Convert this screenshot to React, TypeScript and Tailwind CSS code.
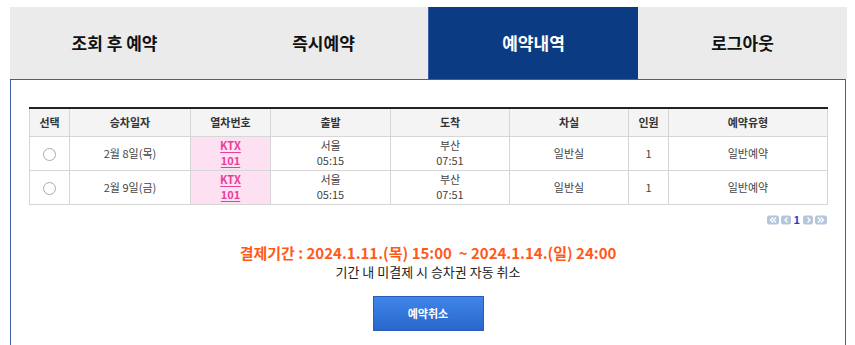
import React from "react";

const tabs = ["조회 후 예약", "즉시예약", "예약내역", "로그아웃"];

const cols = [
  { label: "선택", w: "w-[40px]" },
  { label: "승차일자", w: "w-[121px]" },
  { label: "열차번호", w: "w-[80px]" },
  { label: "출발", w: "w-[120px]" },
  { label: "도착", w: "w-[119px]" },
  { label: "차실", w: "w-[119px]" },
  { label: "인원", w: "w-[40px]" },
  { label: "예약유형", w: "w-[159px]" },
];

const rows = [
  { date: "2월 8일(목)" },
  { date: "2월 9일(금)" },
];

function PageIcon({ kind }: { kind: "first" | "prev" | "next" | "last" }) {
  const paths: Record<string, string> = {
    first: "M6 2.5 3.5 5 6 7.5M9 2.5 6.5 5 9 7.5",
    prev: "M6.5 2.5 4 5 6.5 7.5",
    next: "M4.5 2.5 7 5 4.5 7.5",
    last: "M3 2.5 5.5 5 3 7.5M6 2.5 8.5 5 6 7.5",
  };
  const w = kind === "first" || kind === "last" ? 12 : 10;
  return (
    <svg width={w} height="10" viewBox={`0 0 ${w} 10`} className="block">
      <rect x="0" y="0.5" width={w} height="9" rx="2.5" fill="#b3c6de" />
      <path d={paths[kind]} stroke="#fff" strokeWidth="1.4" fill="none" />
    </svg>
  );
}

export default function App() {
  return (
    <div className="w-[855px] h-[345px] overflow-hidden bg-white pt-[7px] pl-[10px] pr-[8px] font-['Noto_Sans_CJK_KR','Noto_Sans',sans-serif]">
      <div className="flex h-[72px] bg-[#ebebeb]">
        {tabs.map((t, i) => (
          <div
            key={t}
            className={
              i === 2
                ? "flex-1 flex items-center justify-center bg-[#0b3b82] text-white text-[17px] font-bold border-l border-[#3b5ea6]"
                : "flex-1 flex items-center justify-center text-[#111] text-[17px] font-bold"
            }
          >
            {t}
          </div>
        ))}
      </div>
      <div className="h-[330px] mr-[1px] border border-[#3b5ea6] bg-white px-[18px] pt-[27px]">
        <table className="w-[798px] table-fixed border-collapse text-[11px] text-[#444]">
          <thead>
            <tr className="h-[28px] border-t-2 border-[#222] bg-[#f4f4f4]">
              {cols.map((c) => (
                <th
                  key={c.label}
                  className={`${c.w} border border-[#d6d6d6] border-t-[#222] font-bold text-[#333] text-center`}
                >
                  {c.label}
                </th>
              ))}
            </tr>
          </thead>
          <tbody>
            {rows.map((r) => (
              <tr key={r.date} className="h-[34px] text-center">
                <td className="border border-[#d6d6d6]">
                  <span className="inline-block w-[13px] h-[13px] rounded-full border border-[#aaa] bg-white align-middle" />
                </td>
                <td className="border border-[#d6d6d6]">{r.date}</td>
                <td className="border border-[#d6d6d6] bg-[#fde0f1] leading-[15px] font-bold text-[#e8409a]">
                  <span className="underline underline-offset-2">KTX</span>
                  <br />
                  <span className="underline underline-offset-2">101</span>
                </td>
                <td className="border border-[#d6d6d6] leading-[15px]">
                  서울
                  <br />
                  05:15
                </td>
                <td className="border border-[#d6d6d6] leading-[15px]">
                  부산
                  <br />
                  07:51
                </td>
                <td className="border border-[#d6d6d6]">일반실</td>
                <td className="border border-[#d6d6d6]">1</td>
                <td className="border border-[#d6d6d6]">일반예약</td>
              </tr>
            ))}
          </tbody>
        </table>
        <div className="w-[798px] flex justify-end items-center gap-[2px] mt-[9px] h-[12px]">
          <PageIcon kind="first" />
          <PageIcon kind="prev" />
          <span className="text-[11px] font-bold text-[#1d3fd0] leading-none px-[1px]">1</span>
          <PageIcon kind="next" />
          <PageIcon kind="last" />
        </div>
        <div className="w-[798px] flex flex-col items-center mt-[17px]">
          <p className="text-[15px] font-bold text-[#ff5a1a] leading-[20px] whitespace-pre">
            결제기간 : 2024.1.11.(목) 15:00  ~ 2024.1.14.(일) 24:00
          </p>
          <p className="text-[13px] text-[#222] leading-[18px]">기간 내 미결제 시 승차권 자동 취소</p>
          <button
            type="button"
            className="mt-[15px] w-[111px] h-[35px] border border-[#2a5cb8] bg-gradient-to-b from-[#3f86ea] to-[#2a66cb] text-white text-[11px] font-bold"
          >
            예약취소
          </button>
        </div>
      </div>
    </div>
  );
}
